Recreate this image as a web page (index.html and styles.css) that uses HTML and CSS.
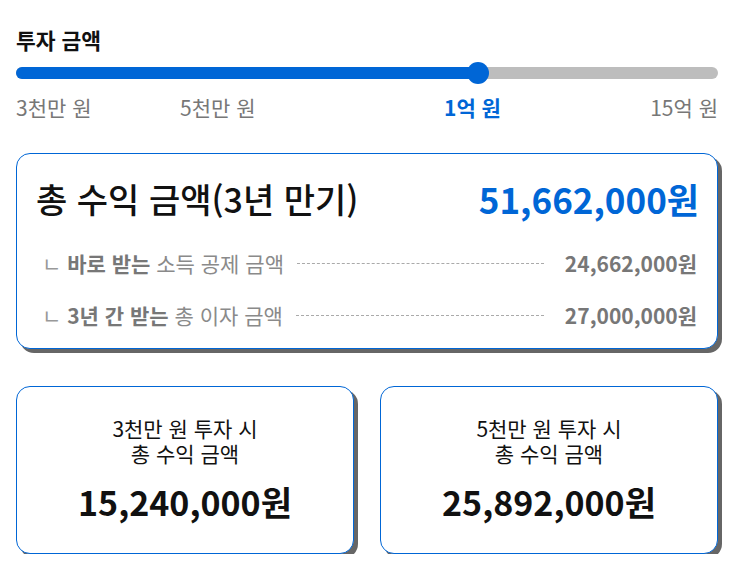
FILE: index.html
```html
<!DOCTYPE html>
<html lang="ko">
<head>
<meta charset="utf-8">
<link rel="stylesheet" href="styles.css">
</head>
<body>
<div class="page">
  <h2 class="title">투자 금액</h2>
  <div class="slider">
    <div class="track">
      <div class="fill" style="width: 65.8%"></div>
      <div class="thumb" style="left: 65.8%"></div>
    </div>
  </div>
  <div class="ticks">
    <span class="tick">3천만 원</span>
    <span class="tick">5천만 원</span>
    <span class="tick active">1억 원</span>
    <span class="tick end">15억 원</span>
  </div>

  <div class="card main">
    <div class="main-head">
      <span class="main-label">총 수익 금액(3년 만기)</span>
      <span class="main-amount">51,662,000원</span>
    </div>
    <div class="row">
      <span class="row-label"><span class="jamo">ㄴ</span> <b>바로 받는</b> 소득 공제 금액</span>
      <span class="dots"></span>
      <span class="row-value">24,662,000원</span>
    </div>
    <div class="row">
      <span class="row-label"><span class="jamo">ㄴ</span> <b>3년 간 받는</b> 총 이자 금액</span>
      <span class="dots"></span>
      <span class="row-value">27,000,000원</span>
    </div>
  </div>

  <div class="pair">
    <div class="card mini">
      <p class="mini-label">3천만 원 투자 시</p>
      <p class="mini-label">총 수익 금액</p>
      <p class="mini-amount">15,240,000원</p>
    </div>
    <div class="card mini">
      <p class="mini-label">5천만 원 투자 시</p>
      <p class="mini-label">총 수익 금액</p>
      <p class="mini-amount">25,892,000원</p>
    </div>
  </div>
</div>
</body>
</html>
```

FILE: styles.css
```css
* { box-sizing: border-box; }
html, body { margin: 0; padding: 0; background: #fff; }
body {
  font-family: "Noto Sans CJK KR", "Noto Sans", sans-serif;
  color: #111;
}
.page { padding: 26px 16px 0 16px; width: 734px; }
.title {
  margin: 0;
  font-size: 21.5px;
  font-weight: 700;
  line-height: 28px;
}
.slider { margin-top: 13px; height: 12px; }
.track {
  position: relative;
  height: 12px;
  border-radius: 6px;
  background: #bdbdbd;
}
.fill {
  height: 12px;
  border-radius: 6px;
  background: #0066d6;
}
.thumb {
  position: absolute;
  top: -5px;
  width: 22px;
  height: 22px;
  margin-left: -11px;
  border-radius: 50%;
  background: #0066d6;
}
.ticks {
  display: grid;
  grid-template-columns: 164px 264px 1fr auto;
  margin-top: 14px;
  font-size: 21px;
  line-height: 28px;
  color: #777;
}
.tick.active { color: #0066d6; font-weight: 700; }
.card {
  border: 1px solid #0066d6;
  border-radius: 14px;
  background: #fff;
  box-shadow: 4px 4px 0 #666;
}
.main {
  margin-top: 32px;
  padding: 21px 18px 14px 19px;
  height: 196px;
}
.main-head {
  display: flex;
  justify-content: space-between;
  align-items: center;
  height: 46px;
  margin-bottom: 16px;
}
.main-label { font-size: 34px; font-weight: 500; }
.main-amount { font-size: 35px; font-weight: 700; color: #0066d6; }
.row {
  display: flex;
  align-items: center;
  height: 52px;
  padding: 0 2px 0 6px;
  font-size: 21px;
  color: #8a8a8a;
}
.jamo { color: #999; }
.row-label b { font-weight: 700; color: #777; }
.dots {
  flex: 1;
  margin: 0 21px 0 13px;
  border-top: 1px dashed #aaa;
}
.row-value { font-weight: 700; color: #777; }
.pair {
  display: grid;
  grid-template-columns: 1fr 1fr;
  gap: 26px;
  margin-top: 37px;
}
.mini {
  height: 168px;
  padding-top: 29px;
  text-align: center;
}
.mini p { margin: 0; }
.mini-label { font-size: 21px; line-height: 25px; }
.mini-amount { margin-top: 14px !important; font-size: 34px; font-weight: 700; line-height: 44px; }
```
